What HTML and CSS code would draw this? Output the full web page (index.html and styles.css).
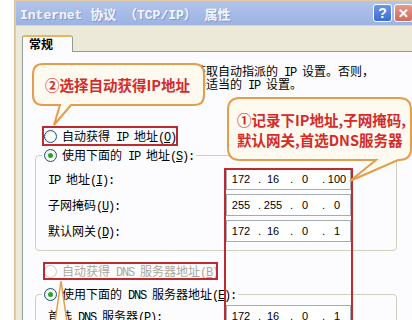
FILE: index.html
```html
<!DOCTYPE html>
<html>
<head>
    <meta charset="utf-8" />
    <title>Internet 协议 (TCP/IP) 属性</title>
    <link rel="stylesheet" href="styles.css">
</head>
<body>
<div class="screen">
    <div class="window">
        <div class="titlebar">
            <span class="title">Internet 协议 （TCP/IP） 属性</span>
            <div class="tbtns">
                <span class="tbtn help">?</span>
                <span class="tbtn close">✕</span>
            </div>
        </div>
        <div class="tabs">
            <div class="tab">常规</div>
        </div>
        <div class="panel">
            <p class="intro">如果网络支持此功能，则可以获取自动指派的<span class="en"> IP </span>设置。否则，<br>您需要从网络系统管理员处获得适当的<span class="en"> IP </span>设置。</p>

            <div class="opt"><span class="radio"></span><span>自动获得<span class="en"> IP </span>地址<span class="en">(<u>O</u>)</span></span></div>

            <fieldset class="group">
                <legend><span class="opt"><span class="radio on"></span><span>使用下面的<span class="en"> IP </span>地址<span class="en">(<u>S</u>):</span></span></span></legend>
                <div class="row first">
                    <span class="lbl"><span class="en">IP </span>地址<span class="en">(<u>I</u>):</span></span>
                    <div class="ip"><span class="o">172</span><span class="d">.</span><span class="o">16</span><span class="d">.</span><span class="o">0</span><span class="d">.</span><span class="o">100</span></div>
                </div>
                <div class="row">
                    <span class="lbl">子网掩码<span class="en">(<u>U</u>):</span></span>
                    <div class="ip"><span class="o">255</span><span class="d">.</span><span class="o">255</span><span class="d">.</span><span class="o">0</span><span class="d">.</span><span class="o">0</span></div>
                </div>
                <div class="row">
                    <span class="lbl">默认网关<span class="en">(<u>D</u>):</span></span>
                    <div class="ip"><span class="o">172</span><span class="d">.</span><span class="o">16</span><span class="d">.</span><span class="o">0</span><span class="d">.</span><span class="o">1</span></div>
                </div>
            </fieldset>

            <div class="opt off"><span class="radio"></span><span>自动获得<span class="en"> DNS </span>服务器地址<span class="en">(<u>B</u>)</span></span></div>

            <fieldset class="group dns">
                <legend><span class="opt"><span class="radio on"></span><span>使用下面的<span class="en"> DNS </span>服务器地址<span class="en">(<u>E</u>):</span></span></span></legend>
                <div class="row first">
                    <span class="lbl">首选<span class="en"> DNS </span>服务器<span class="en">(<u>P</u>):</span></span>
                    <div class="ip"><span class="o">172</span><span class="d">.</span><span class="o">16</span><span class="d">.</span><span class="o">0</span><span class="d">.</span><span class="o">1</span></div>
                </div>
                <div class="row">
                    <span class="lbl">备用<span class="en"> DNS </span>服务器<span class="en">(<u>A</u>):</span></span>
                    <div class="ip"><span class="o"></span><span class="d">.</span><span class="o"></span><span class="d">.</span><span class="o"></span><span class="d">.</span><span class="o"></span></div>
                </div>
            </fieldset>
        </div>
    </div>

    <!-- red frames and speech bubbles drawn over the dialog -->
    <svg class="marks" width="412" height="320" viewBox="0 0 412 320">
        <rect x="43" y="127" width="134" height="18" fill="none" stroke="#bd2b2e" stroke-width="2"/>
        <rect x="225" y="169" width="127" height="160" fill="none" stroke="#bd2b2e" stroke-width="2"/>
        <rect x="44" y="263" width="173" height="16" fill="none" stroke="#bd2b2e" stroke-width="2"/>
        <path d="M43,64 H194 Q204,64 204,74 V95 Q204,105 194,105 H71 L54,125 L60,105 H43 Q33,105 33,95 V74 Q33,64 43,64 Z" fill="#fffaf0" stroke="#e49d4c" stroke-width="2"/>
        <path d="M240,98 H399 Q411,98 411,110 V148 Q411,160 399,160 H398 L350,181 L376,160 H240 Q228,160 228,148 V110 Q228,98 240,98 Z" fill="#fffaf0" stroke="#e49d4c" stroke-width="2"/>
        <path d="M61,281 L55,322 L67,322 Z" fill="#fffaf0" stroke="#e49d4c" stroke-width="1.5"/>
    </svg>
    <div class="note note2">②选择自动获得IP地址</div>
    <div class="note note1">①记录下IP地址,子网掩码,<br>默认网关,首选DNS服务器</div>
</div>
</body>
</html>
```

FILE: styles.css
```css
body{
    margin: 0;
    background: #fff;
    overflow: hidden;
}
.screen{
    position: relative;
    width: 412px;
    height: 320px;
    overflow: hidden;
    font-family: "Liberation Mono", "Noto Sans CJK SC", monospace;
    font-size: 12px;
    color: #000;
}
/* latin runs are half width next to the CJK glyphs */
.en{
    letter-spacing: -1.2px;
}
.window{
    margin-left: 14px;
    width: 398px;
    height: 330px;
    background: #ece9d8;
    border-left: 2px solid #e4c89f;
    border-top: 1px solid #e4c89f;
}
.titlebar{
    height: 25px;
    display: flex;
    align-items: center;
    justify-content: space-between;
    padding-left: 4px;
    background: linear-gradient(#b1c4eb, #9db3e1);
    border-bottom: 1px solid #c9d5ef;
    box-sizing: border-box;
}
.title{
    font: bold 13px "Liberation Mono", "Noto Sans CJK SC", monospace;
    color: #f3f6fe;
    text-shadow: 1px 1px 0 #8499c8;
    white-space: nowrap;
}
.tbtns{
    display: flex;
    gap: 2px;
    padding-right: 1px;
}
.tbtn{
    width: 19px;
    height: 18px;
    box-sizing: border-box;
    border: 1px solid #fff;
    border-radius: 3px;
    display: flex;
    align-items: center;
    justify-content: center;
    color: #fff;
    font: bold 14px "Liberation Sans", sans-serif;
}
.help{
    background: linear-gradient(#6d95e6, #3c6cd2);
}
.close{
    background: linear-gradient(#e39a8c, #cf6b5c);
    font-size: 13px;
}
.tabs{
    height: 25px;
    padding-left: 6px;
    display: flex;
    align-items: flex-end;
}
.tab{
    position: relative;
    z-index: 1;
    width: 51px;
    height: 17px;
    margin-bottom: -1px;
    box-sizing: border-box;
    border: 1px solid #919b9c;
    border-top: 2px solid #eab45c;
    border-bottom: none;
    border-radius: 3px 3px 0 0;
    background: #fcfcfe;
    padding-left: 6px;
    font: bold 12px "Noto Sans CJK SC", sans-serif;
    line-height: 14px;
}
.panel{
    margin-left: 6px;
    width: 385px;
    height: 300px;
    border: 1px solid #919b9c;
    background: #fcfcfe;
    padding: 14px 0 0 12px;
    box-sizing: content-box;
}
.intro{
    margin: 1px 0 0 3px;
    line-height: 13px;
    white-space: nowrap;
}
.opt{
    display: flex;
    align-items: center;
    gap: 5px;
    height: 16px;
    margin: 35px 0 0 9px;
    white-space: nowrap;
}
.opt.off{
    margin-top: 12px;
    color: #aca899;
}
.radio{
    width: 13px;
    height: 13px;
    flex: none;
    box-sizing: border-box;
    border: 1px solid #1c5180;
    border-radius: 50%;
    background: radial-gradient(circle at 60% 60%, #fff 30%, #dcdad0);
    display: flex;
    align-items: center;
    justify-content: center;
}
.radio.on::after{
    content: "";
    width: 5px;
    height: 5px;
    border-radius: 50%;
    background: #26a626;
}
.opt.off .radio{
    border-color: #cac8bb;
    background: #fff;
}
.group{
    width: 362px;
    margin: 3px 0 0 0;
    padding: 0 0 8px 6px;
    box-sizing: border-box;
    border: 1px solid #d0d0bf;
    border-radius: 4px;
}
.group.dns{
    margin-top: 7px;
    height: 80px;
}
.group legend{
    padding: 0 2px;
}
.group legend .opt{
    margin: 0;
}
.row{
    display: flex;
    align-items: center;
    height: 22px;
    margin: 4px 0 0 6px;
    white-space: nowrap;
}
.row.first{
    margin-top: 5px;
}
.dns .row.first{
    margin-top: 3px;
}
.lbl{
    width: 178px;
}
.ip{
    width: 125px;
    height: 22px;
    box-sizing: border-box;
    border: 1px solid #a3abb6;
    background: #fff;
    display: flex;
    align-items: center;
    padding-left: 2px;
    font: 11px "Liberation Sans", sans-serif;
}
.ip .o{
    width: 24px;
    text-align: center;
}
.ip .d{
    width: 8px;
    text-align: right;
}
.marks{
    position: absolute;
    left: 0;
    top: 0;
}
.note{
    position: absolute;
    font: bold 14.5px "Noto Sans CJK SC", sans-serif;
    line-height: 20px;
    color: #d42a2a;
    white-space: nowrap;
}
.note2{
    left: 45px;
    top: 75px;
}
.note1{
    left: 237px;
    top: 110px;
}
```
